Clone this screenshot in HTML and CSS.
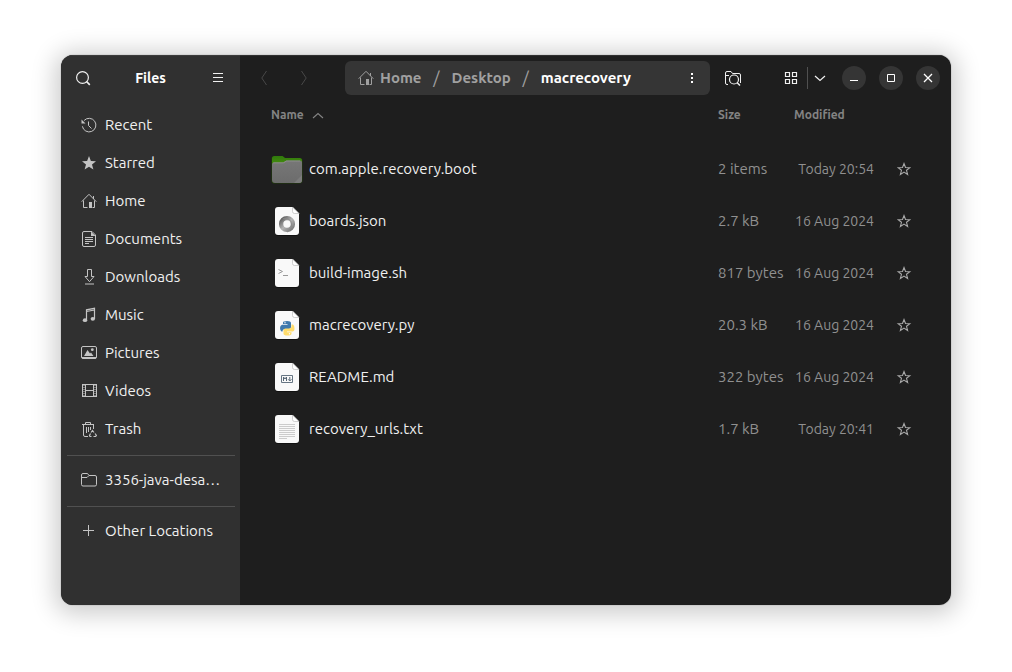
FILE: index.html
```html
<!DOCTYPE html>
<html lang="en">
<head>
<meta charset="utf-8">
<title>Files</title>
<link rel="stylesheet" href="styles.css">
</head>
<body>
<svg class="defs" aria-hidden="true">
  <defs>
    <linearGradient id="tab" x1="0" y1="0" x2="0" y2="1"><stop offset="0" stop-color="#2f7a0c"/><stop offset="1" stop-color="#4a8f0f"/></linearGradient>
    <linearGradient id="front" x1="0" y1="0" x2="0" y2="1"><stop offset="0" stop-color="#777"/><stop offset="1" stop-color="#6c6c6c"/></linearGradient>
    <linearGradient id="ring" x1="0" y1="0" x2="1" y2="1"><stop offset="0" stop-color="#5c5c5c"/><stop offset=".5" stop-color="#b4b4b4"/><stop offset="1" stop-color="#777"/></linearGradient>
    <symbol id="home" viewBox="0 0 16 16"><path d="M.7 8.7 8 1.3l7.3 7.4M2.5 7.5v7h4M13.500 7.500v7h-2M12.500 3v3" fill="none" stroke="currentColor"/><path d="M8 9h3v6H8z" fill="currentColor"/></symbol>
    <symbol id="star" viewBox="0 0 16 16"><path d="m8 2.500 1.500 4 4.300.2-3.300 2.600 1.100 4.200L8 11.100l-3.600 2.400 1.100-4.200-3.300-2.600 4.300-.2z" fill="none" stroke="currentColor" stroke-width="1.100"/></symbol>
    <symbol id="page" viewBox="0 0 32 32"><path d="M7 2.500h14l7 6V28a3 3 0 0 1-3 3H7a3 3 0 0 1-3-3V5.500a3 3 0 0 1 3-3z" fill="#111"/><path d="M7 2h14.500L28 8.500V27a3 3 0 0 1-3 3H7a3 3 0 0 1-3-3V5a3 3 0 0 1 3-3z" fill="#f9f9f9"/><path d="M21.500 2v4.500a2 2 0 0 0 2 2H28z" fill="#fff" stroke="#bbb" stroke-width=".7"/></symbol>
  </defs>
</svg>
<div class="window">
  <aside class="sidebar">
    <header class="sidebar-head">
      <button class="icon-btn" aria-label="Search"><svg class="icon" viewBox="0 0 16 16"><circle cx="7.500" cy="7.500" r="5.900" fill="none" stroke="currentColor" stroke-width="1.200"/><path d="m11.500 11.500 3.300 3.300" stroke="currentColor" stroke-width="1.700"/></svg></button>
      <h1 class="title">Files</h1>
      <button class="icon-btn" aria-label="Main menu"><svg class="icon" viewBox="0 0 16 16"><path d="M3 3.500h10M3 7.500h10M3 11.500h10" stroke="currentColor"/></svg></button>
    </header>
    <nav class="places">
      <a class="place" href="#recent"><svg class="icon" viewBox="0 0 16 16"><path d="M3.100 3.500A6.800 6.800 0 1 1 1.400 9.300M7.500 4.500V8.500l3 3" fill="none" stroke="currentColor"/><path d="M.5 2.500v4H4.500z" fill="currentColor"/></svg><span>Recent</span></a>
      <a class="place" href="#starred"><svg class="icon" viewBox="0 0 16 16"><path d="m8 1 1.900 4.900 5.100.3-4 3.300 1.400 5L8 11.700l-4.400 2.800 1.400-5-4-3.300 5.100-.3z" fill="currentColor"/></svg><span>Starred</span></a>
      <a class="place" href="#home"><svg class="icon"><use href="#home"/></svg><span>Home</span></a>
      <a class="place" href="#documents"><svg class="icon" viewBox="0 0 16 16"><path d="M3 .5h8L14.500 4v10a1.500 1.500 0 0 1-1.500 1.500H3A1.500 1.500 0 0 1 1.500 14V2A1.500 1.500 0 0 1 3 .5zM4 6.500h8M4 8.500h8M4 10.500h8M4 12.500h4" fill="none" stroke="currentColor"/><path d="M10 .5V5h4.500z" fill="currentColor"/></svg><span>Documents</span></a>
      <a class="place" href="#downloads"><svg class="icon" viewBox="0 0 16 16"><path d="M6.500.5h4v7H13l-4.500 5.200L4 7.500h2.500zM4 15h9" fill="none" stroke="currentColor"/></svg><span>Downloads</span></a>
      <a class="place" href="#music"><svg class="icon" viewBox="0 0 16 16"><path d="M5.500 13V2.800l8-1.500V12M5.500 4.500l8-1.500" fill="none" stroke="currentColor" stroke-width="1.200"/><ellipse cx="4" cy="13.200" rx="2.200" ry="1.900" fill="currentColor"/><ellipse cx="11.800" cy="11.800" rx="2.200" ry="1.900" fill="currentColor"/></svg><span>Music</span></a>
      <a class="place" href="#pictures"><svg class="icon" viewBox="0 0 16 16"><rect x=".5" y="1.500" width="15" height="12" rx="1.500" fill="none" stroke="currentColor"/><path d="M1 12h14v1.500H1zM3 11l3.500-6L9 8.500l1-1 2.500 3.500z" fill="currentColor"/><circle cx="11.300" cy="4.700" r="1.400" fill="currentColor"/></svg><span>Pictures</span></a>
      <a class="place" href="#videos"><svg class="icon" viewBox="0 0 16 16"><path d="M1 1.500h15M1 13.500h15M4.500 2v11M12.500 2v11M4.500 7.500h8" fill="none" stroke="currentColor"/><path d="M1.500 1v13M15.500 1v13" stroke="currentColor"/><path d="M3 2v12M14 2v12" stroke="currentColor" stroke-dasharray="1 1"/></svg><span>Videos</span></a>
      <a class="place" href="#trash"><svg class="icon" viewBox="0 0 16 16"><path d="M1 3.500h12M4.500 3V1.500h5V3M2.500 4v10a1.500 1.500 0 0 0 1.500 1.500h3M12.500 4v4M5.500 6v6M7.500 6v5M9.500 6v3" fill="none" stroke="currentColor"/><path d="m10 11.500 1.500-2 1.500 2M14 12.500l1.500 2-1 1h-2M10.500 15.500H9l-.5-1 1-2" fill="none" stroke="currentColor" stroke-width="1.200"/></svg><span>Trash</span></a>
      <hr class="rule">
      <a class="place" href="#java"><svg class="icon" viewBox="0 0 16 16"><path d="M.5 12.500v-9.500A1.500 1.500 0 0 1 2 1.500h4.500L8 3.500h6a1.500 1.500 0 0 1 1.500 1.500v7.500A1.500 1.500 0 0 1 14 14H2a1.500 1.500 0 0 1-1.500-1.500zM.5 5.500H6L8 3.500" fill="none" stroke="currentColor"/></svg><span>3356-java-desa…</span></a>
      <hr class="rule">
      <a class="place" href="#other"><svg class="icon" viewBox="0 0 16 16"><path d="M2 7.500h11M7.500 2v11" stroke="currentColor"/></svg><span>Other Locations</span></a>
    </nav>
  </aside>
  <main class="main">
    <header class="toolbar">
      <div class="history">
        <button class="icon-btn" aria-label="Back" disabled><svg class="icon" viewBox="0 0 16 16"><path d="M10.500 1 5.800 8l4.700 7" fill="none" stroke="currentColor"/></svg></button>
        <button class="icon-btn" aria-label="Forward" disabled><svg class="icon" viewBox="0 0 16 16"><path d="m5.500 1 4.700 7-4.700 7" fill="none" stroke="currentColor"/></svg></button>
      </div>
      <div class="pathbar">
        <a class="crumb" href="#home"><svg class="icon"><use href="#home"/></svg>Home</a>
        <span class="slash">/</span>
        <a class="crumb" href="#desktop">Desktop</a>
        <span class="slash">/</span>
        <a class="crumb current" href="#macrecovery">macrecovery</a>
        <button class="icon-btn more" aria-label="Folder menu"><svg class="icon" viewBox="0 0 16 16"><path d="M7 3h2v2H7zM7 7h2v2H7zM7 11h2v2H7z" fill="currentColor"/></svg></button>
      </div>
      <button class="icon-btn find" aria-label="Search in folder"><svg class="icon" viewBox="0 0 16 16"><path d="M3 14.500H2A1.500 1.500 0 0 1 .5 13V3A1.500 1.500 0 0 1 2 1.500h4L7.500 3.500H14A1.500 1.500 0 0 1 15.500 5v8M.5 5.500H4" fill="none" stroke="currentColor"/><circle cx="9" cy="9.500" r="4.500" fill="none" stroke="currentColor" stroke-width="1.200"/><path d="m12 12.500 3 3" stroke="currentColor" stroke-width="1.500"/></svg></button>
      <div class="view">
        <button class="icon-btn grid" aria-label="Grid view"><svg class="icon" viewBox="0 0 16 16"><path d="M2.500 2.500h4v4h-4zM9.500 2.500h4v4h-4zM2.500 9.500h4v4h-4zM9.500 9.500h4v4h-4z" fill="none" stroke="currentColor" stroke-width="1.200"/></svg></button>
        <button class="icon-btn split" aria-label="View options"><svg class="icon" viewBox="0 0 16 16"><path d="m3 6 5 4.500L13 6" fill="none" stroke="currentColor" stroke-width="1.200"/></svg></button>
      </div>
      <div class="controls">
        <button class="round" aria-label="Minimize"><svg class="icon" viewBox="0 0 16 16"><path d="M4 10.500h8" stroke="currentColor"/></svg></button>
        <button class="round" aria-label="Maximize"><svg class="icon" viewBox="0 0 16 16"><path d="M4.500 4.500h7v7h-7z" fill="none" stroke="currentColor"/></svg></button>
        <button class="round" aria-label="Close"><svg class="icon" viewBox="0 0 16 16"><path d="m4 4 8 8M12 4l-8 8" stroke="currentColor" stroke-width="1.300"/></svg></button>
      </div>
    </header>
    <table class="files">
      <thead>
        <tr><th class="name">Name<svg class="icon sort" viewBox="0 0 16 16"><path d="m3 10 5-4.500 5 4.500" fill="none" stroke="currentColor" stroke-width="1.100"/></svg></th><th class="size">Size</th><th class="date">Modified</th><th class="fav"></th></tr>
      </thead>
      <tbody>
        <tr><td><div class="file"><svg class="file-icon" viewBox="0 0 32 32"><path d="M.5 28V5.500A2.500 2.500 0 0 1 3 3h8.500L14 5h15a2.500 2.500 0 0 1 2.500 2.500v20a3 3 0 0 1-3 3h-25A2.500 2.500 0 0 1 .5 28z" fill="#213d0b"/><path d="M1 12V5.500A2.500 2.500 0 0 1 3.500 3h8L14 5h14.500A2.500 2.500 0 0 1 31 7.500V12z" fill="url(#tab)"/><path d="M1 11a2 2 0 0 1 2-1.500h9L15.500 7.500H29A2 2 0 0 1 31 9.500V27a3 3 0 0 1-3 3H4a3 3 0 0 1-3-3z" fill="url(#front)"/><path d="M2 10.300q.5-.5 1-.5h9.500L15.500 8H29" fill="none" stroke="#999" stroke-width=".7"/><path d="m31 22-8 8h5a3 3 0 0 0 3-3z" fill="#7c7c7c"/></svg>com.apple.recovery.boot</div></td><td class="size">2 items</td><td class="date">Today 20:54</td><td class="fav"><button class="icon-btn" aria-label="Star com.apple.recovery.boot"><svg class="icon"><use href="#star"/></svg></button></td></tr>
        <tr><td><div class="file"><svg class="file-icon" viewBox="0 0 32 32"><use href="#page"/><circle cx="16" cy="19" r="5.900" fill="none" stroke="url(#ring)" stroke-width="4.400"/><path d="M12 13.500q8-1 8.500 5.500t-4.500 8" fill="none" stroke="#888" stroke-width=".8"/></svg>boards.json</div></td><td class="size">2.7 kB</td><td class="date">16 Aug 2024</td><td class="fav"><button class="icon-btn" aria-label="Star boards.json"><svg class="icon"><use href="#star"/></svg></button></td></tr>
        <tr><td><div class="file"><svg class="file-icon" viewBox="0 0 32 32"><use href="#page"/><path d="m7.500 12.500 4 2-4 2M12 18.500h5" fill="none" stroke="#999"/></svg>build-image.sh</div></td><td class="size">817 bytes</td><td class="date">16 Aug 2024</td><td class="fav"><button class="icon-btn" aria-label="Star build-image.sh"><svg class="icon"><use href="#star"/></svg></button></td></tr>
        <tr><td><div class="file"><svg class="file-icon" viewBox="0 0 32 32"><use href="#page"/><path d="M12 14.500V13.500Q12 12 16 12t4 2v4q0 2-2 2h-4q-2.500 0-2.500 2.500h-1Q9 21.500 9 19t2-3.200h5.500V15H12z" fill="#3f79ad"/><path d="M20.500 15.500H22q1.500 1 1.500 4t-2 3H16v.8h4.500v1.200q0 2-4 2t-4-2v-3q0-2 2-2H18q2.500 0 2.500-2.500z" fill="#ffdc6b"/><circle cx="14" cy="13.700" r=".7" fill="#fff"/><circle cx="18.500" cy="24.700" r=".7" fill="#fff"/></svg>macrecovery.py</div></td><td class="size">20.3 kB</td><td class="date">16 Aug 2024</td><td class="fav"><button class="icon-btn" aria-label="Star macrecovery.py"><svg class="icon"><use href="#star"/></svg></button></td></tr>
        <tr><td><div class="file"><svg class="file-icon" viewBox="0 0 32 32"><use href="#page"/><path d="M10.500 14.500h11v7h-11z" fill="none" stroke="#667583"/><path d="M12.500 20v-4l1.500 2 1.500-2v4M18.800 16v3M17.200 18.300l1.600 1.700 1.600-1.700" fill="none" stroke="#556573"/></svg>README.md</div></td><td class="size">322 bytes</td><td class="date">16 Aug 2024</td><td class="fav"><button class="icon-btn" aria-label="Star README.md"><svg class="icon"><use href="#star"/></svg></button></td></tr>
        <tr><td><div class="file"><svg class="file-icon" viewBox="0 0 32 32"><use href="#page"/><path d="M8 11.500h16M8 13.500h16M8 15.500h16M8 17.500h16M8 19.500h16M8 21.500h16M8 23.500h16M8 25.500h8" stroke="#ccc"/></svg>recovery_urls.txt</div></td><td class="size">1.7 kB</td><td class="date">Today 20:41</td><td class="fav"><button class="icon-btn" aria-label="Star recovery_urls.txt"><svg class="icon"><use href="#star"/></svg></button></td></tr>
      </tbody>
    </table>
  </main>
</div>
</body>
</html>
```
FILE: styles.css
```css
* { box-sizing: border-box; }

body {
  margin: 0;
  min-height: 100vh;
  padding: 55px 61px 67px;
  display: flex;
  background: #fff;
  color: #f0f0f0;
  font: 15px/20px Ubuntu, "Noto Sans", sans-serif;
}

.defs { position: absolute; width: 0; height: 0; }

.window {
  flex: 1;
  display: flex;
  min-width: 0;
  border-radius: 12px;
  overflow: hidden;
  background: #1e1e1e;
  box-shadow: 0 3px 24px 6px rgba(0, 0, 0, .2), 0 0 0 1px rgba(0, 0, 0, .06);
}

a { color: inherit; text-decoration: none; }

button {
  padding: 0;
  border: 0;
  background: none;
  color: inherit;
  font: inherit;
}

.icon { display: block; flex: none; width: 16px; height: 16px; }

.icon-btn {
  display: flex;
  align-items: center;
  justify-content: center;
  width: 24px;
  height: 34px;
}

/* Sidebar */
.sidebar { flex: none; width: 179px; background: #303030; box-shadow: inset 0 1px #3c3c3c; }

.sidebar-head {
  display: flex;
  align-items: center;
  justify-content: space-between;
  height: 46px;
  padding: 0 10px;
}

.title { margin: 0; font-size: 14px; line-height: 20px; font-weight: 700; color: #fff; }

.places { padding: 5px 5px 5px 6px; }

.place {
  display: flex;
  align-items: center;
  gap: 8px;
  height: 38px;
  padding: 0 10px 0 14px;
}

.place .icon { color: #c4c4c4; }
.place span { white-space: nowrap; }

.rule { height: 1px; margin: 7px 0 5px; border: 0; background: #505050; }

/* Toolbar */
.main { flex: 1; min-width: 0; box-shadow: inset 0 1px #303030; }

.toolbar { display: flex; align-items: center; height: 46px; padding: 0 11px 0 12px; }

.history { display: flex; gap: 16px; }
.history .icon-btn { color: #484848; }

.pathbar {
  flex: 1;
  display: flex;
  align-items: center;
  min-width: 0;
  height: 34px;
  margin-left: 29px;
  padding: 0 6px 0 13px;
  border-radius: 6px;
  background: #353535;
  font-weight: 600;
  color: #a0a0a0;
}

.crumb { display: flex; align-items: center; gap: 6px; }
.current { color: #fff; }
.slash { width: 30px; text-align: center; font-size: 17px; font-weight: 400; }
.more { margin-left: auto; color: #fff; }
.find { margin-left: 11px; }

.view { display: flex; align-items: center; margin-left: 30px; }
.view .split { height: 22px; border-left: 1px solid #505050; }
.view .grid { width: 32px; }

.controls { display: flex; gap: 13px; margin-left: 11px; }

.round {
  display: flex;
  align-items: center;
  justify-content: center;
  width: 24px;
  height: 24px;
  border-radius: 50%;
  background: #353535;
  color: #fff;
}

/* File list */
.files {
  width: 100%;
  table-layout: fixed;
  border-collapse: collapse;
  white-space: nowrap;
}

th {
  height: 42px;
  padding: 0 0 14px;
  text-align: left;
  font-size: 12px;
  font-weight: 600;
  color: #838383;
}

td { height: 52px; padding: 0; color: #909090; }

th.name { padding-left: 31px; }
.sort { display: inline-block; margin-left: 6px; vertical-align: middle; }
th.size { width: 76px; }
th.date { width: 81px; }
td.date { padding-right: 1px; text-align: right; font-size: 14px; }
.fav { width: 76px; }
.fav .icon-btn { margin-left: 17px; color: #a8a8a8; }

.file {
  display: flex;
  align-items: center;
  gap: 6px;
  padding-left: 31px;
  color: #f0f0f0;
}

.file-icon { flex: none; width: 32px; height: 32px; }
```
